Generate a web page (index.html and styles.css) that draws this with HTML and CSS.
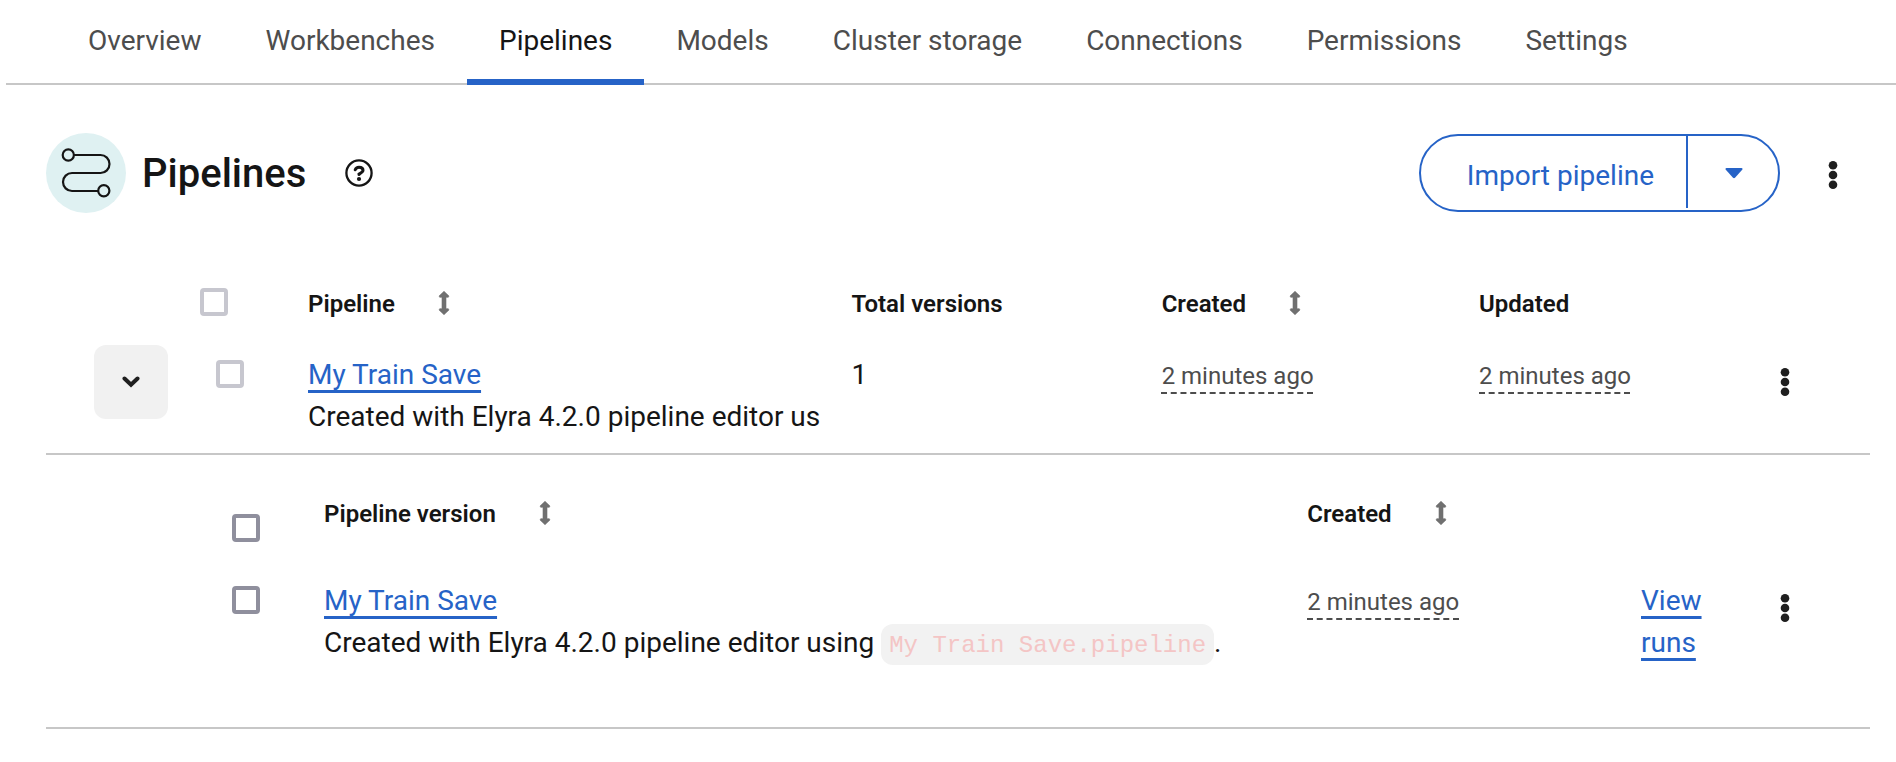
FILE: index.html
```html
<!DOCTYPE html>
<html lang="en">
<head>
<meta charset="utf-8">
<title>Pipelines</title>
<link rel="stylesheet" href="styles.css">
</head>
<body>
<svg class="sprite" aria-hidden="true">
  <symbol id="sort" viewBox="0 0 12 24"><path d="M6 0.300 11 5.100 10.300 6.300H8v11.400h2.300l.7 1.200L6 23.700 1 18.900l.7-1.200H4V6.300H1.700L1 5.100Z" stroke-width="0.600" stroke="currentColor" stroke-linejoin="round" fill="currentColor"/></symbol>
  <symbol id="kebab" viewBox="0 0 10 28"><circle cx="5" cy="4.300" r="4.300"/><circle cx="5" cy="14" r="4.300"/><circle cx="5" cy="23.700" r="4.300"/></symbol>
</svg>
<nav class="tabs" aria-label="Project sections">
  <a class="tab" href="#overview">Overview</a>
  <a class="tab" href="#workbenches">Workbenches</a>
  <a class="tab tab-active" href="#pipelines" aria-current="page">Pipelines</a>
  <a class="tab" href="#models">Models</a>
  <a class="tab" href="#storage">Cluster storage</a>
  <a class="tab" href="#connections">Connections</a>
  <a class="tab" href="#permissions">Permissions</a>
  <a class="tab" href="#settings">Settings</a>
</nav>
<main class="content">
  <header class="heading">
    <span class="badge">
      <svg width="80" height="80" viewBox="0 0 80 80" fill="none" stroke="#151515" stroke-width="2.200" aria-hidden="true">
        <circle cx="22.300" cy="22" r="5.600"/>
        <path d="M28 22H54.500a9 9 0 0 1 0 18H26a9 9 0 0 0 0 18H52"/>
        <circle cx="57.800" cy="57.700" r="5.600"/>
      </svg>
    </span>
    <h1 class="title">Pipelines</h1>
    <button class="icon-button help" type="button" aria-label="Help">
      <svg width="28" height="28" viewBox="0 0 28 28" fill="none" stroke="#151515" aria-hidden="true">
        <circle cx="14" cy="14" r="12.600" stroke-width="2.300"/>
        <path d="M10.200 10.800C10.800 9.100 12.200 8.300 14 8.300c2.300 0 4 1.200 4 3 0 2-2 2.500-4 3.700v.6" stroke-width="3" stroke-linecap="round"/>
        <circle cx="14" cy="20" r="2.100" fill="#151515" stroke="none"/>
      </svg>
    </button>
    <div class="split">
      <button class="split-main" type="button">Import pipeline</button>
      <button class="split-toggle" type="button" aria-label="More import options">
        <svg width="18" height="11" viewBox="0 0 18 11" fill="currentColor" aria-hidden="true"><path d="M1.500 0h15c1 0 1.300 1 .7 1.700L10 9.800c-.6.6-1.400.6-2 0L.8 1.700C.2 1 .5 0 1.500 0Z"/></svg>
      </button>
    </div>
    <button class="icon-button page-actions" type="button" aria-label="Page actions"><svg class="kebab"><use href="#kebab"/></svg></button>
  </header>

  <table class="grid pipelines">
    <colgroup><col class="col-toggle"><col class="col-check"><col class="col-name"><col class="col-total"><col class="col-created"><col><col class="col-actions"></colgroup>
    <thead>
      <tr>
        <td></td>
        <td class="check-cell check-all"><input type="checkbox" class="check" aria-label="Select all pipelines" disabled></td>
        <th scope="col"><button class="sort" type="button">Pipeline<svg class="sort-icon"><use href="#sort"/></svg></button></th>
        <th scope="col">Total versions</th>
        <th scope="col"><button class="sort" type="button">Created<svg class="sort-icon"><use href="#sort"/></svg></button></th>
        <th scope="col">Updated</th>
        <td></td>
      </tr>
    </thead>
    <tbody>
      <tr class="pipeline-row">
        <td class="toggle-cell"><button class="toggle" type="button" aria-label="Collapse My Train Save" aria-expanded="true"><svg width="18" height="12" viewBox="0 0 18 12" fill="none" stroke="#1f1f1f" stroke-width="4" stroke-linecap="round" stroke-linejoin="miter" aria-hidden="true"><path d="M2.500 2.500 9 8.800l6.500-6.300"/></svg></button></td>
        <td class="check-cell check-row"><input type="checkbox" class="check" aria-label="Select pipeline My Train Save" disabled></td>
        <td class="name-cell"><a class="link" href="#pipeline">My Train Save</a><p class="description clipped">Created with Elyra 4.2.0 pipeline editor using</p></td>
        <td>1</td>
        <td><time class="time">2 minutes ago</time></td>
        <td><time class="time">2 minutes ago</time></td>
        <td class="actions-cell"><button class="icon-button" type="button" aria-label="Pipeline actions"><svg class="kebab"><use href="#kebab"/></svg></button></td>
      </tr>
      <tr>
        <td class="expanded" colspan="7">
          <table class="grid versions">
            <colgroup><col class="col-indent"><col><col class="col-version-created"><col class="col-runs"><col class="col-actions"></colgroup>
            <thead>
              <tr>
                <td class="check-cell version-all"><input type="checkbox" class="check" aria-label="Select all versions"></td>
                <th scope="col"><button class="sort" type="button">Pipeline version<svg class="sort-icon"><use href="#sort"/></svg></button></th>
                <th scope="col"><button class="sort" type="button">Created<svg class="sort-icon"><use href="#sort"/></svg></button></th>
                <td></td>
                <td></td>
              </tr>
            </thead>
            <tbody>
              <tr class="version-row">
                <td class="check-cell version-check"><input type="checkbox" class="check" aria-label="Select version My Train Save"></td>
                <td><a class="link" href="#version">My Train Save</a><p class="description">Created with Elyra 4.2.0 pipeline editor using <code class="code">My Train Save.pipeline</code>.</p></td>
                <td><time class="time">2 minutes ago</time></td>
                <td class="runs-cell"><a class="link" href="#runs">View runs</a></td>
                <td class="actions-cell"><button class="icon-button" type="button" aria-label="Version actions"><svg class="kebab"><use href="#kebab"/></svg></button></td>
              </tr>
            </tbody>
          </table>
        </td>
      </tr>
    </tbody>
  </table>
</main>
</body>
</html>
```
FILE: styles.css
```css
* { box-sizing: border-box; }

body {
  margin: 0;
  background: #fff;
  color: #151515;
  font: 28px/42px Roboto, "Liberation Sans", sans-serif;
}

button {
  padding: 0;
  border: 0;
  background: none;
  color: inherit;
  font: inherit;
  cursor: pointer;
}

svg { display: block; }
.sprite { position: absolute; width: 0; height: 0; }

/* Tabs */
.tabs {
  display: flex;
  margin-left: 6px;
  padding-left: 50px;
  box-shadow: inset 0 -2px #c7c7c7;
}
.tab {
  padding: 20px 32px 17px;
  border-bottom: 6px solid transparent;
  color: #4d4d4d;
  text-decoration: none;
  white-space: nowrap;
}
.tab-active { border-color: #2663c7; color: #151515; }

/* Page heading */
.content { padding: 48px 26px 0 46px; }
.heading { display: flex; align-items: center; }
.badge { border-radius: 50%; background: #dff1f2; }
.title { margin: 0 0 0 16px; padding-top: 2px; font-size: 40px; line-height: 52px; font-weight: 500; }
.icon-button { padding: 8px; }
.help { margin-left: 31px; }
.kebab { width: 10px; height: 28px; fill: #1f1f1f; }
.split {
  display: flex;
  margin: 0 40px 0 auto;
  border: 2px solid #2663c7;
  border-radius: 40px;
  color: #2663c7;
}
.split-main {
  margin-bottom: 2px;
  padding: 19px 32px 11px 46px;
  border-right: 2px solid #2663c7;
}
.split-toggle { padding: 0 35px 0 37px; }
.page-actions { margin: 4px 24px 0 0; }

/* Tables */
.grid { width: 100%; border-collapse: collapse; table-layout: fixed; }
.pipelines { margin-top: 56px; }
.grid th, .grid td { padding: 17px 0 15px; text-align: left; vertical-align: top; }
.grid th { font-size: 24px; line-height: 36px; font-weight: 600; }
.sort { display: flex; align-items: center; gap: 43px; }
.sort-icon { width: 12px; height: 24px; margin-bottom: 2px; color: #707070; }

.col-toggle { width: 138px; }
.col-check { width: 124px; }
.col-name { width: 29.8%; }
.col-total { width: 17%; }
.col-created { width: 17.4%; }
.col-actions { width: 121px; }
.col-indent { width: 278px; }
.col-version-created { width: 18.3%; }
.col-runs { width: 108px; }

.check {
  display: block;
  width: 28px;
  height: 28px;
  margin: 0;
  appearance: none;
  border: 4px solid #8f8f9d;
  border-radius: 4px;
  background: #fff;
}
.check:disabled { border-color: #c7c7cf; }
.grid .check-all { padding: 19px 0 0 16px; }
.grid .check-row { padding: 23px 0 0 32px; }
.grid .version-all { padding: 35px 0 0 186px; }
.grid .version-check { padding: 23px 0 0 186px; }

.pipeline-row { border-bottom: 2px solid #c7c7c7; }
.grid .toggle-cell { padding: 8px 0 0 48px; }
.toggle {
  display: grid;
  place-items: center;
  width: 74px;
  height: 74px;
  border-radius: 12px;
  background: #f1f1f1;
}
.grid .name-cell { padding-right: 32px; }
.grid .actions-cell { padding: 23px 0 0 23px; }
.description { margin: 0; }
.clipped { overflow: hidden; white-space: nowrap; }
.link {
  color: #2663c7;
  text-decoration: underline 3px;
  text-underline-offset: 6px;
}
.time {
  color: #4d4d4d;
  font-size: 24px;
  text-decoration: underline dashed 2px;
  text-underline-offset: 8px;
  text-decoration-skip-ink: none;
}

.grid .expanded { padding: 24px 0 0; }
.grid.versions th { padding-bottom: 31px; }
.versions { border-bottom: 2px solid #c7c7c7; }
.grid .version-row td { padding-bottom: 63px; }
.grid .runs-cell { padding-right: 40px; }
.code {
  padding: 8px 8px 6px;
  border-radius: 12px;
  background: #f2f2f2;
  color: #f4c5c5;
  font: 24px/36px "Liberation Mono", monospace;
}
```
